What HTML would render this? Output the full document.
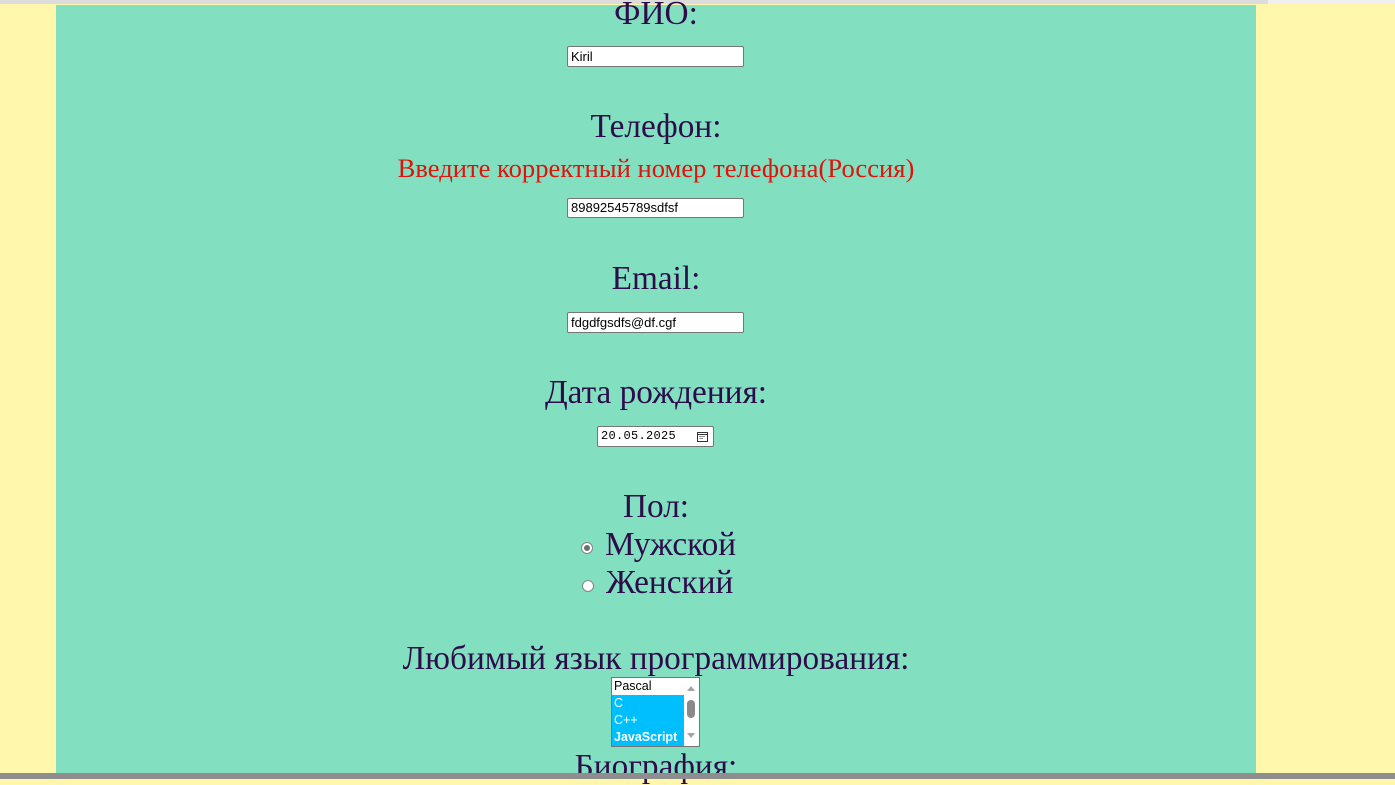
<!DOCTYPE html>
<html><head><meta charset="utf-8"><style>
html,body{margin:0;padding:0;width:1395px;height:779px;overflow:hidden;background:#fff7ab;}
.top{position:absolute;left:0;top:0;width:1268px;height:4px;background:#dcdcdc;}
.top2{position:absolute;left:1268px;top:0;width:127px;height:4px;background:#f0f0f0;}
.panel{position:absolute;left:56px;top:5px;width:1200px;height:774px;background:#82e0c0;}
.bot{position:absolute;left:0;top:773px;width:1395px;height:6px;background:#8e8e8e;}
.l{position:absolute;left:56px;width:1200px;text-align:center;font-family:"Liberation Serif",serif;font-size:33.3px;line-height:32px;color:#2d0c4c;white-space:nowrap;}
.err{color:#e0120c;font-size:26.6px;}
.in{position:absolute;box-sizing:border-box;background:#fff;border:1px solid #767676;border-radius:2px;font-family:"Liberation Sans",sans-serif;font-size:13px;color:#000;padding:0 3px;line-height:19px;}
.rad{position:absolute;width:12px;height:12px;border-radius:50%;box-sizing:border-box;border:1px solid #858585;background:#fff;}
</style></head><body>
<div class="top"></div><div class="top2"></div>
<div class="panel"></div>
<div class="l" style="top:-2px">ФИО:</div>
<div class="in" style="left:567px;top:46px;width:177px;height:21px">Kiril</div>
<div class="l" style="top:111px">Телефон:</div>
<div class="l err" style="top:152px">Введите корректный номер телефона(Россия)</div>
<div class="in" style="left:567px;top:198px;width:177px;height:20px;line-height:18px">89892545789sdfsf</div>
<div class="l" style="top:263px">Email:</div>
<div class="in" style="left:567px;top:312px;width:177px;height:21px">fdgdfgsdfs@df.cgf</div>
<div class="l" style="top:377px">Дата рождения:</div>
<div class="in" style="left:597px;top:426px;width:117px;height:21px;font-family:'Liberation Mono',monospace;font-size:12px;letter-spacing:0.3px">20.05.2025
<svg style="position:absolute;right:5px;top:4px" width="11" height="11" viewBox="0 0 11 11"><rect x="0.5" y="1.5" width="10" height="9" fill="none" stroke="#333"/><line x1="0.5" y1="3.5" x2="10.5" y2="3.5" stroke="#333"/><rect x="2.5" y="5" width="1" height="1" fill="#333"/><rect x="4.5" y="5" width="1" height="1" fill="#333"/><rect x="6.5" y="5" width="1" height="1" fill="#333"/><rect x="2.5" y="7" width="1" height="1" fill="#333"/><rect x="4.5" y="7" width="1" height="1" fill="#333"/></svg></div>
<div class="l" style="top:491px">Пол:</div>
<div class="rad" style="left:581px;top:542px;"><div style="position:absolute;left:2px;top:2px;width:6px;height:6px;border-radius:50%;background:#6f6f6f"></div></div>
<div class="l" style="top:529px;left:605px;width:auto;text-align:left">Мужской</div>
<div class="rad" style="left:582px;top:580px;"></div>
<div class="l" style="top:567px;left:606px;width:auto;text-align:left">Женский</div>
<div class="l" style="top:643px">Любимый язык программирования:</div>
<div style="position:absolute;left:611px;top:677px;width:89px;height:70px;box-sizing:border-box;border:1px solid #767676;background:#fff;font-family:'Liberation Sans',sans-serif;font-size:12.5px;line-height:17px;overflow:hidden">
<div style="padding-left:2px;width:70px;color:#000">Pascal</div>
<div style="padding-left:2px;width:70px;background:#00bfff;color:#fff">C</div>
<div style="padding-left:2px;width:70px;background:#00bfff;color:#fff">C++</div>
<div style="padding-left:2px;width:70px;background:#00bfff;color:#fff;font-weight:bold">JavaScript</div>
<div style="position:absolute;right:0;top:0;width:15px;height:68px;background:#fff"></div>
<div style="position:absolute;right:4px;top:8px;border:4px solid transparent;border-bottom:5px solid #a3a3a3;border-top:0"></div>
<div style="position:absolute;right:4px;top:22px;width:8px;height:18px;border-radius:4px;background:#8a8a8a"></div>
<div style="position:absolute;right:4px;bottom:8px;border:4px solid transparent;border-top:5px solid #a3a3a3;border-bottom:0"></div>
</div>
<div class="l" style="top:751px">Биография:</div>
<div class="bot"></div>
</body></html>
